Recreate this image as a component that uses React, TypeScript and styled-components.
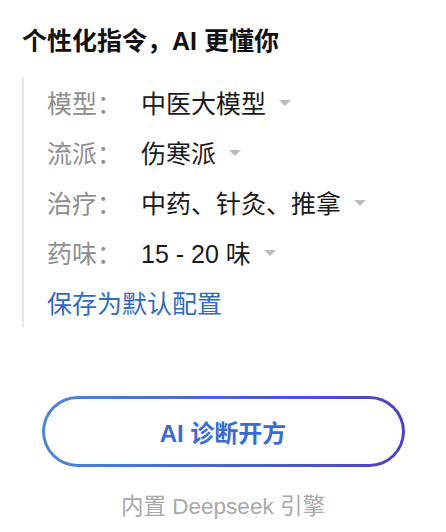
import React from "react";
import styled, { createGlobalStyle } from "styled-components";

const GlobalStyle = createGlobalStyle`
  html, body {
    margin: 0;
    padding: 0;
    background: #ffffff;
  }
  body {
    font-family: "Liberation Sans", "Noto Sans CJK SC", sans-serif;
    -webkit-font-smoothing: antialiased;
  }
`;

const Page = styled.div`
  width: 446px;
  height: 532px;
  box-sizing: border-box;
  padding: 25px 0 0 22px;
  display: flex;
  flex-direction: column;
`;

const Title = styled.h2`
  margin: 0;
  font-size: 25px;
  line-height: 32px;
  font-weight: 700;
  color: #111111;
`;

const Panel = styled.div`
  margin-top: 20px;
  border-left: 2px solid #e6e6e6;
  padding-left: 23px;
  display: flex;
  flex-direction: column;
`;

const Row = styled.div`
  display: flex;
  align-items: center;
  height: 50px;
  font-size: 25px;
`;

const Label = styled.span`
  width: 94px;
  flex-shrink: 0;
  color: #8e8e8e;
`;

const Value = styled.span`
  color: #1a1a1a;
  display: flex;
  align-items: center;
  gap: 13px;
`;

const Caret = styled.span`
  width: 0;
  height: 0;
  border-left: 6px solid transparent;
  border-right: 6px solid transparent;
  border-top: 6px solid #bdbdbd;
  margin-top: 2px;
`;

const SaveLink = styled.a`
  display: flex;
  align-items: center;
  height: 50px;
  font-size: 25px;
  color: #2f6cc0;
  text-decoration: none;
  cursor: pointer;
`;

const ButtonWrap = styled.div`
  margin: 69px 0 0 -22px;
  display: flex;
  justify-content: center;
`;

const GradientButton = styled.button`
  width: 363px;
  height: 71px;
  border: 3px solid transparent;
  border-radius: 36px;
  background:
    linear-gradient(#ffffff, #ffffff) padding-box,
    linear-gradient(90deg, #4a86da 0%, #4c5fd0 55%, #4e3fc2 100%) border-box;
  font-family: inherit;
  font-size: 24px;
  font-weight: 700;
  color: #3b6bd0;
  cursor: pointer;
`;

const Footer = styled.div`
  margin: 25px 0 0 -22px;
  text-align: center;
  font-size: 22.5px;
  line-height: 30px;
  color: #a9a9a9;
`;

const options = [
  { label: "模型：", value: "中医大模型" },
  { label: "流派：", value: "伤寒派" },
  { label: "治疗：", value: "中药、针灸、推拿" },
  { label: "药味：", value: "15 - 20 味" },
];

export default function App() {
  return (
    <>
      <GlobalStyle />
      <Page>
        <Title>个性化指令，AI 更懂你</Title>
        <Panel>
          {options.map((o) => (
            <Row key={o.label}>
              <Label>{o.label}</Label>
              <Value>
                {o.value}
                <Caret />
              </Value>
            </Row>
          ))}
          <SaveLink>保存为默认配置</SaveLink>
        </Panel>
        <ButtonWrap>
          <GradientButton>AI 诊断开方</GradientButton>
        </ButtonWrap>
        <Footer>内置 Deepseek 引擎</Footer>
      </Page>
    </>
  );
}
